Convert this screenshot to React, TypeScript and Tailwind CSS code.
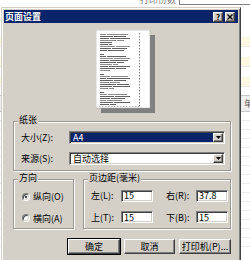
import React from 'react';

const sunken =
  'border border-t-[#808080] border-l-[#808080] border-r-white border-b-white shadow-[inset_1px_1px_0_#404040,inset_-1px_-1px_0_#d4d0c8]';
const raised =
  'border border-t-white border-l-white border-r-[#404040] border-b-[#404040] shadow-[inset_-1px_-1px_0_#808080] bg-[#d4d0c8]';

// widths of the fake text lines in the page preview (0 = blank line)
const previewLines = [
  28, 26, 30, 24, 14, 12, 30, 27, 24, 0, 4, 26, 30, 28, 24, 18, 30, 26, 10, 0, 4, 28, 30, 26, 20, 29, 30, 14, 0,
  4, 27, 30, 25, 22, 30, 16,
];

function PagePreview() {
  return (
    <div className="ml-[92px] mt-[7px] w-[59px] h-[83px]">
      <svg width="59" height="83" viewBox="0 0 59 83">
        <rect x="5" y="5" width="54" height="78" fill="#808080" />
        <rect x="0" y="0" width="54" height="78" fill="#ffffff" stroke="#a0a0a0" strokeWidth="0.5" />
        {previewLines.map((w, i) => {
          if (!w) return null;
          const cut = (i * 7) % 11 + 6;
          return (
            <g key={i} fill="#303030" opacity={i % 3 ? 0.75 : 0.55}>
              <rect x="4" y={4 + i * 2} width={Math.min(cut, w)} height="1" />
              {w > cut + 2 && <rect x={5 + cut} y={4 + i * 2} width={w - cut - 1} height="1" />}
            </g>
          );
        })}
        <line x1="43.5" y1="3" x2="43.5" y2="76" stroke="#606060" strokeWidth="0.8" strokeDasharray="1.5 1.5" />
        <line x1="3" y1="76.5" x2="44" y2="76.5" stroke="#909090" strokeWidth="0.6" strokeDasharray="1.5 1.5" />
      </svg>
    </div>
  );
}

function Combo({ value, selected }: { value: string; selected?: boolean }) {
  return (
    <div className={`flex h-[13px] w-[156px] bg-white ${sunken} p-[1px]`}>
      <div
        className={`flex-1 flex items-center pl-[2px] leading-none ${selected ? 'bg-[#0a246a] text-white' : 'text-black'}`}
      >
        {value}
      </div>
      <div className={`w-[10px] flex items-center justify-center ${raised}`}>
        <svg width="5" height="3" viewBox="0 0 5 3">
          <path d="M0 0h5L2.5 3z" fill="#000" />
        </svg>
      </div>
    </div>
  );
}

function Field({ label, value }: { label: React.ReactNode; value: string }) {
  return (
    <div className="flex items-center">
      <span className="w-[30px]">{label}</span>
      <div className={`w-[32px] h-[12px] bg-white ${sunken} flex items-center pl-[2px] leading-none`}>{value}</div>
    </div>
  );
}

function Group({ title, className, children }: { title: string; className: string; children: React.ReactNode }) {
  return (
    <div className={`relative border border-[#9a978f] shadow-[1px_1px_0_#ffffff,inset_1px_1px_0_#ffffff] ${className}`}>
      <span className="absolute -top-[7px] left-[4px] px-[1px] bg-[#d4d0c8] leading-none">{title}</span>
      {children}
    </div>
  );
}

export default function App() {
  return (
    <div className="relative w-[250px] h-[260px] overflow-hidden bg-white font-['Noto_Sans_CJK_SC',sans-serif] text-[9px] text-black">
      {/* background sheet */}
      <div className="flex flex-col">
        <div className="relative h-[8px] flex">
          <span className="ml-[140px] -mt-[5px] text-[#808080] text-[9px] leading-none">打印份数</span>
          <div className="ml-[3px] flex-1 h-[5px] border-l border-b border-[#808080]" />
        </div>
        <div className="h-[29px] bg-white" />
        <div className="h-[10px] bg-[#fdf8e1] border-b border-[#e8e8e8]" />
        <div className="h-[10px] bg-white" />
        <div className="h-[10px] bg-[#fdf8e1] border-b border-[#e8e8e8]" />
        <div className="h-[10px] bg-white" />
        <div className="h-[10px] bg-[#fdf8e1] border-b border-[#e8e8e8]" />
        <div className="h-[8px] bg-white" />
        <div className="h-[17px] bg-[#eeeeee] border-y border-[#c8c8c8] flex items-center pl-[244px] text-[#606060]">单</div>
        {Array.from({ length: 15 }).map((_, i) => (
          <div key={i} className="h-[9px] bg-white border-b border-[#ececec]" />
        ))}
      </div>

      {/* dialog window */}
      <div className="absolute left-[1px] top-[7px] w-[240px] h-[260px] bg-[#d4d0c8] border border-t-[#d4d0c8] border-l-[#d4d0c8] border-r-[#404040] border-b-[#404040] shadow-[inset_1px_1px_0_#ffffff,inset_-1px_-1px_0_#808080] p-[2px]">
        <div className="h-[13px] bg-[#0a246a] flex items-center pl-[1px] pr-[3px]">
          <span className="text-white font-bold text-[9px] leading-none">页面设置</span>
          <div className="ml-auto flex gap-[2px]">
            <div className={`w-[10px] h-[10px] flex items-center justify-center text-[8px] font-bold leading-none ${raised}`}>?</div>
            <div className={`w-[10px] h-[10px] flex items-center justify-center ${raised}`}>
              <svg width="6" height="6" viewBox="0 0 6 6">
                <path d="M0.5 0.5L5.5 5.5M5.5 0.5L0.5 5.5" stroke="#000" strokeWidth="1.4" />
              </svg>
            </div>
          </div>
        </div>

        <PagePreview />

        <Group title="纸张" className="ml-[9px] mr-[7px] mt-[8px] h-[50px] pt-[9px] pl-[7px]">
          <div className="flex flex-col gap-[7px]">
            <div className="flex items-center">
              <span className="w-[48px]">大小(Z):</span>
              <Combo value="A4" selected />
            </div>
            <div className="flex items-center">
              <span className="w-[48px]">来源(S):</span>
              <Combo value="自动选择" />
            </div>
          </div>
        </Group>

        <div className="flex ml-[9px] mr-[7px] mt-[8px] gap-[9px]">
          <Group title="方向" className="w-[61px] h-[50px] pt-[10px] pl-[8px]">
            <div className="flex flex-col gap-[8px]">
              <div className="flex items-center gap-[3px]">
                <span className={`w-[8px] h-[8px] rounded-full bg-white ${sunken} flex items-center justify-center`}>
                  <span className="w-[2px] h-[2px] rounded-full bg-black" />
                </span>
                <span>纵向(O)</span>
              </div>
              <div className="flex items-center gap-[3px]">
                <span className={`w-[8px] h-[8px] rounded-full bg-white ${sunken}`} />
                <span>横向(A)</span>
              </div>
            </div>
          </Group>
          <Group title="页边距(毫米)" className="flex-1 h-[50px] pt-[9px] pl-[7px]">
            <div className="flex flex-col gap-[8px]">
              <div className="flex gap-[13px]">
                <Field label="左(L):" value="15" />
                <Field label="右(R):" value="37.8" />
              </div>
              <div className="flex gap-[13px]">
                <Field label="上(T):" value="15" />
                <Field label="下(B):" value="15" />
              </div>
            </div>
          </Group>
        </div>

        <div className="flex justify-end gap-[4px] mr-[7px] mt-[10px]">
          <button className={`w-[52px] h-[15px] leading-none outline outline-1 outline-black ${raised}`}>确定</button>
          <button className={`w-[51px] h-[15px] leading-none ${raised}`}>取消</button>
          <button className={`w-[52px] h-[15px] leading-none ${raised}`}>打印机(P)...</button>
        </div>
      </div>
    </div>
  );
}
